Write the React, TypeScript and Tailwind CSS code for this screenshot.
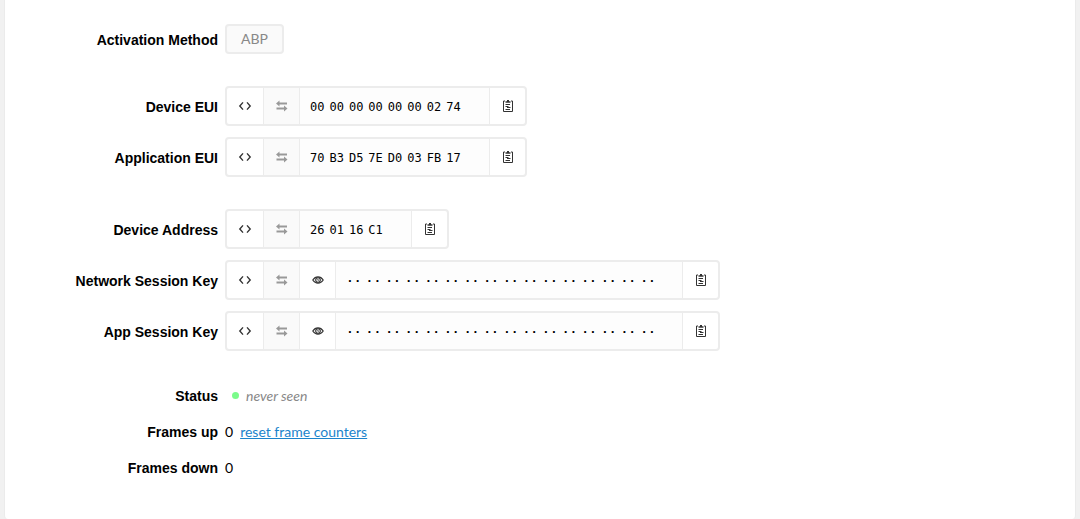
import type { ReactNode } from "react";
import clsx from "clsx";

const CodeIcon = () => (
  <svg width="14" height="12" viewBox="0 0 14 12" fill="none" stroke="currentColor" strokeWidth="1.4" aria-hidden="true">
    <path d="M5 2.4 1.8 6 5 9.6M9 2.4 12.2 6 9 9.6" />
  </svg>
);

const SwapIcon = () => (
  <svg width="12" height="12" viewBox="0 0 12 12" fill="currentColor" aria-hidden="true">
    <path d="M0 3.5 3.5 .6V2.6H11v1.8H3.5v2zM11.5 8.5 8 5.6v2H.5v1.8H8v2z" />
  </svg>
);

const EyeIcon = () => (
  <svg width="12" height="10" viewBox="0 0 12 10" fill="none" stroke="currentColor" aria-hidden="true">
    <path d="M0.8 5C2.2 2.8 4 1.8 6 1.8S9.8 2.8 11.2 5C9.8 7.2 8 8.2 6 8.2S2.2 7.2 0.8 5z" strokeWidth="1.2" />
    <circle cx="6" cy="5" r="2.3" strokeWidth="1.1" />
    <path d="M5.8 3.8V5.2H7" strokeWidth="0.8" />
  </svg>
);

const ClipboardIcon = () => (
  <svg width="10" height="12" viewBox="0 0 10 12" fill="none" stroke="currentColor" aria-hidden="true">
    <path d="M2 1H.5v10.5h9V1H8" />
    <path d="M2.5 2h5M4 .5h2" strokeWidth="1.6" />
    <path d="M2.5 4.5H7M2.5 6.5h3M4 7.5h3.5M2.5 9.5H7" />
  </svg>
);

const Row = ({ label, children }: { label: string; children: ReactNode }) => (
  <div className="flex items-center gap-[7px]">
    <dt className="w-[213px] shrink-0 pt-px text-right font-['Liberation_Sans',sans-serif] text-sm leading-5 font-bold">
      {label}
    </dt>
    <dd className="flex items-center">{children}</dd>
  </div>
);

const cell = "flex shrink-0 items-center justify-center";

type ByteFieldProps = {
  name: string;
  value: string;
  className: string;
  secret?: boolean;
};

const ByteField = ({ name, value, className, secret }: ByteFieldProps) => (
  <div
    className={clsx(
      "flex h-10 divide-x divide-[#ececec] rounded border-2 border-[#ececec] bg-white text-[#333]",
      className,
    )}
  >
    <button type="button" aria-label={`Toggle ${name} format`} className={clsx(cell, "w-[37px]")}>
      <CodeIcon />
    </button>
    <button
      type="button"
      disabled
      aria-label={`Swap ${name} byte order`}
      className={clsx(cell, "w-9 bg-[#fafafa] text-[#999]")}
    >
      <SwapIcon />
    </button>
    {secret && (
      <button type="button" aria-label={`Show ${name}`} className={clsx(cell, "w-9")}>
        <EyeIcon />
      </button>
    )}
    <div
      className={clsx(
        "flex flex-1 items-center bg-[#fdfdfd] pl-2.5 text-black",
        secret
          ? "gap-1 pt-[3px] font-['Liberation_Mono',monospace] text-[13px] font-bold"
          : "gap-[5px] pt-px font-['DejaVu_Sans_Mono',monospace] text-xs",
      )}
    >
      {value.split(" ").map((byte, i) => (
        <span key={i}>{secret ? "··" : byte}</span>
      ))}
    </div>
    <button type="button" aria-label={`Copy ${name}`} className={clsx(cell, "w-[35px]")}>
      <ClipboardIcon />
    </button>
  </div>
);

const hidden = Array(16).fill("00").join(" ");

const App = () => (
  <div className="min-h-screen bg-[#f1f1f1] px-1 font-[Lato,sans-serif] text-black">
    <main className="min-h-screen rounded-b border-x border-[#ebebeb] bg-white pt-6 pb-10">
      <dl className="flex flex-col">
        <Row label="Activation Method">
          <span className="rounded border-2 border-[#ececec] bg-[#fafafa] px-3.5 py-[3px] text-sm leading-5 text-[#888]">
            ABP
          </span>
        </Row>

        <div className="mt-8 flex flex-col gap-[11px]">
          <Row label="Device EUI">
            <ByteField name="Device EUI" value="00 00 00 00 00 00 02 74" className="w-[302px]" />
          </Row>
          <Row label="Application EUI">
            <ByteField name="Application EUI" value="70 B3 D5 7E D0 03 FB 17" className="w-[302px]" />
          </Row>
        </div>

        <div className="mt-8 flex flex-col gap-[11px]">
          <Row label="Device Address">
            <ByteField name="Device Address" value="26 01 16 C1" className="w-[224px]" />
          </Row>
          <Row label="Network Session Key">
            <ByteField name="Network Session Key" value={hidden} className="w-[495px]" secret />
          </Row>
          <Row label="App Session Key">
            <ByteField name="App Session Key" value={hidden} className="w-[495px]" secret />
          </Row>
        </div>

        <div className="mt-[34px] flex flex-col gap-[15px]">
          <Row label="Status">
            <span className="ml-[7px] size-[7px] rounded-full bg-[#7bfb8b]" />
            <em className="ml-[7px] text-sm leading-5 text-[#888]">never seen</em>
          </Row>
          <Row label="Frames up">
            <span className="text-sm leading-5">0</span>
            <a href="#reset" className="ml-[7px] pt-px text-sm leading-5 text-[#1c84cc] underline">
              reset frame counters
            </a>
          </Row>
          <Row label="Frames down">
            <span className="text-sm leading-5">0</span>
          </Row>
        </div>
      </dl>
    </main>
  </div>
);

export default App;
